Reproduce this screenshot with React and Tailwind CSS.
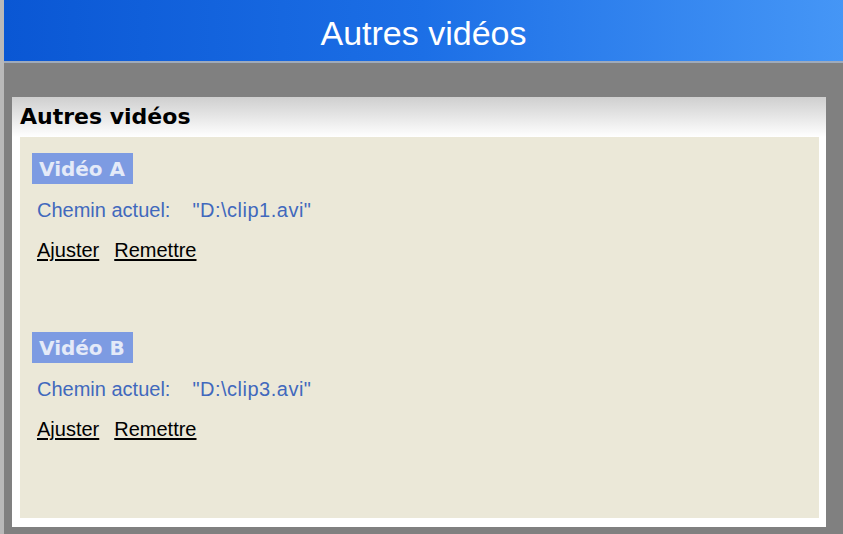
import React from 'react'

const videos = [
  { name: 'Vidéo A', path: '"D:\\clip1.avi"' },
  { name: 'Vidéo B', path: '"D:\\clip3.avi"' },
]

const VideoBlock = ({ name, path }) => {
  return (
    <div className="flex flex-col">
      <div className="flex h-[31px] w-[101px] items-center bg-[#7d9be2] pl-[7px] font-['DejaVu_Sans',sans-serif] text-[20px] leading-none font-bold text-[#e4eaf8]">
        {name}
      </div>
      <div className="mt-[14px] ml-[5px] flex text-[20px] leading-[24px] text-[#4168bd]">
        <span>Chemin actuel:</span>
        <span className="ml-[22px] tracking-[0.5px]">{path}</span>
      </div>
      <div className="mt-[16px] ml-[5px] flex gap-[15px] text-[20px] leading-[24px] text-black">
        <a href="#" className="underline decoration-[1.5px] underline-offset-[2px]">Ajuster</a>
        <a href="#" className="underline decoration-[1.5px] underline-offset-[2px]">Remettre</a>
      </div>
    </div>
  )
}

const App = () => {
  return (
    <div className="flex h-[534px] w-[843px] flex-col overflow-hidden border-l-4 border-[#b9b9b9] bg-[#808080] font-['Liberation_Sans',Arial,sans-serif]">
      {/* Top bar */}
      <header className="flex h-[63px] shrink-0 items-center justify-center border-b-2 border-[#9eaabb] bg-gradient-to-r from-[#0a57d4] via-[#1c6fe6] to-[#4596f6] pt-[5px] text-[34px] text-white">
        Autres vidéos
      </header>

      {/* Panel */}
      <div className="mt-[34px] ml-[8px] mr-[17px] flex h-[430px] flex-col bg-white">
        <div className="h-[40px] shrink-0 bg-gradient-to-b from-[#cfcfcf] to-white pl-[8px] pt-[7px] font-['DejaVu_Sans',sans-serif] text-[22px] leading-[26px] font-bold text-black">
          Autres vidéos
        </div>
        <div className="mb-[9px] ml-[8px] mr-[7px] flex flex-1 flex-col gap-[70px] bg-[#ebe8d8] pl-[12px] pt-[16px]">
          {videos.map((v) => (
            <VideoBlock key={v.name} name={v.name} path={v.path} />
          ))}
        </div>
      </div>
    </div>
  )
}

export default App
